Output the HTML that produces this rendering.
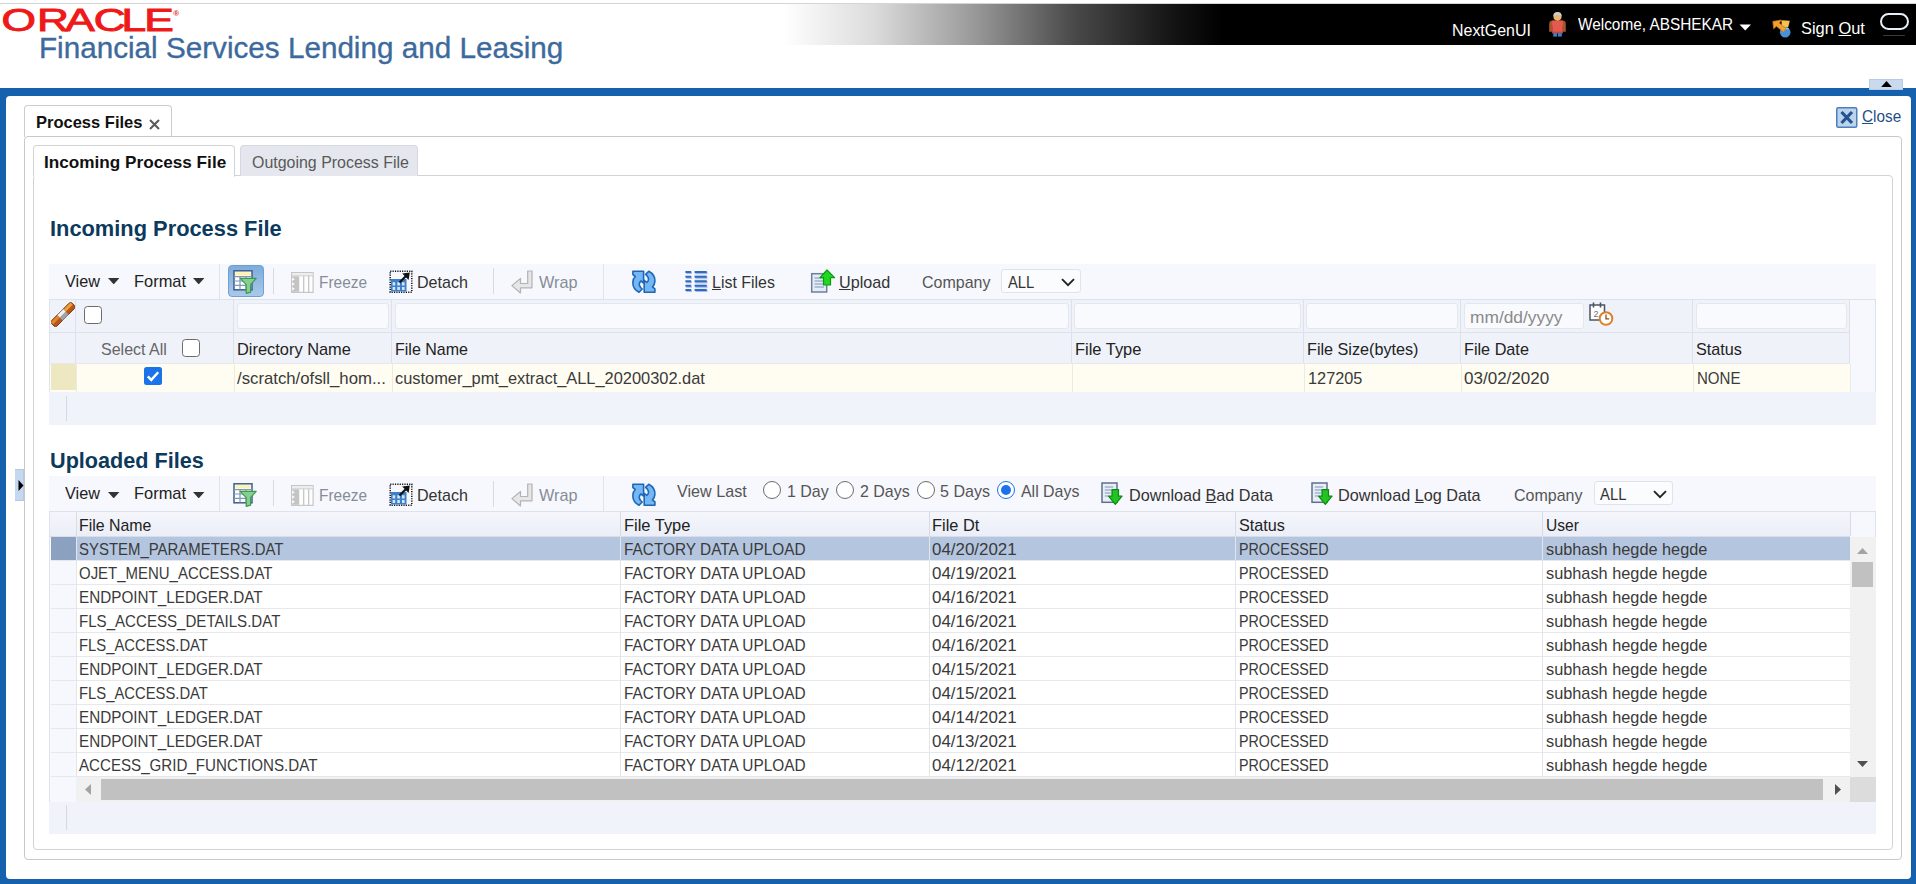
<!DOCTYPE html>
<html lang="en"><head><meta charset="utf-8"><title>Process Files</title>
<style>
html,body{margin:0;padding:0;}
body{width:1916px;height:884px;position:relative;overflow:hidden;background:#fff;font-family:"Liberation Sans",sans-serif;}
body>div,body>span,body>svg{position:absolute;box-sizing:border-box;}
.t{white-space:pre;display:block;transform-origin:0 0;}
u{text-decoration:underline;text-underline-offset:1px;}
.fs{-webkit-text-stroke:0.35px #3c6a9c;}

</style></head>
<body>
<div style="left:0px;top:3px;width:1916px;height:1px;background:#d4d4d4;"></div>
<div style="left:783px;top:4px;width:1133px;height:40.7px;background:linear-gradient(to right,#fff 0px,#dcdcdc 90px,#9a9a9a 190px,#4a4a4a 290px,#141414 390px,#000 440px);"></div>
<svg style="left:0;top:0" width="200" height="40" viewBox="0 0 200 40"><g transform="scale(1.42,1)"><text x="1.1 26.1 46 66 85.6 101.6" y="31.4" font-family="Liberation Sans, sans-serif" font-size="31.2" fill="#ee1a1a" stroke="#ee1a1a" stroke-width="0.95">ORACLE</text></g><text x="173.2" y="15.6" font-family="Liberation Sans, sans-serif" font-size="8" font-weight="700" fill="#ee1a1a">®</text></svg>
<span class="t fs" style="left:39.3px;top:33px;font-size:30px;line-height:30px;color:#3c6a9c;transform:scaleX(0.9886);">Financial Services Lending and Leasing</span>
<span class="t " style="left:1452.2px;top:22px;font-size:17px;line-height:17px;color:#fff;transform:scaleX(0.9382);">NextGenUI</span>
<span class="t " style="left:1577.5px;top:16px;font-size:17px;line-height:17px;color:#fff;transform:scaleX(0.9036);">Welcome, ABSHEKAR</span>
<svg style="left:1739px;top:24px" width="13" height="7" viewBox="0 0 13 7"><path d="M0.5 0.5h11.5l-5.75 6z" fill="#fff"/></svg>
<span class="t " style="left:1801.2px;top:20px;font-size:17px;line-height:17px;color:#fff;transform:scaleX(0.9657);">Sign <u>O</u>ut</span>
<svg style="left:1548px;top:11.5px" width="19" height="25" viewBox="0 0 19 25"><path d="M1.2 12q0-3.4 3.4-3.4h9.8q3.4 0 3.4 3.4v7.8h-3v-6h-10.6v6h-3z" fill="#a9552c"/><rect x="4.2" y="8.6" width="10.6" height="12" fill="#e55a4e"/><rect x="4.2" y="19.6" width="10.6" height="1.8" fill="#c7463c"/><rect x="5.2" y="21" width="3.9" height="3.6" fill="#3f7cc0"/><rect x="9.9" y="21" width="3.9" height="3.6" fill="#3f7cc0"/><circle cx="9.5" cy="4.6" r="4.1" fill="#eab676"/><path d="M5.4 4.2a4.1 4.1 0 0 1 8.2 0q-2 -1.6 -4.1 -1.2q-2.1 -.4 -4.1 1.2z" fill="#cfcfc9"/></svg>
<svg style="left:1772px;top:19px" width="20" height="19" viewBox="0 0 20 19"><circle cx="13.2" cy="13.2" r="5.3" fill="#4a90d9"/><path d="M10 11.5a4.5 4.5 0 0 1 6.5 -1.5" stroke="#9cc6f0" stroke-width="1.6" fill="none"/><path d="M9.5 1.2l8.3 .6 -1.6 6.4 -6.5 -.4z" fill="#f5c04e"/><path d="M0.8 2.4l8.6 -1.4 -2.2 3 7 5.6 -2.8 3.4 -7 -5.8 -2.7 2.6z" fill="#f0a030" stroke="#d07c16" stroke-width=".7"/></svg>
<div style="left:1879.5px;top:12.7px;width:29px;height:17.6px;border:2.8px solid #e6eefa;border-radius:8.8px;"></div>
<div style="left:1883px;top:35px;width:22px;height:1.4px;background:#3a3a3a;border-radius:1px;"></div>
<div style="left:0px;top:88.3px;width:1916px;height:795.7px;background:#1661ae;"></div>
<div style="left:6px;top:95.8px;width:1904.6px;height:782.8px;background:#fff;border-radius:4px;"></div>
<div style="left:1910.6px;top:100px;width:1.8px;height:774px;background:#1c5a9c;"></div>
<div style="left:1869px;top:79px;width:34px;height:11px;background:#c9daef;border:1px solid #b5cbe6;"></div>
<svg style="left:1880.5px;top:80.7px" width="11" height="6.2" viewBox="0 0 11 6.2"><path d="M0 6.2l5.5-6.2 5.5 6.2z" fill="#000"/></svg>
<div style="left:15.4px;top:469.4px;width:8.6px;height:31.6px;background:#c5d8f0;border:1px solid #b2c9e8;border-left:none;"></div>
<svg style="left:18px;top:480px" width="6" height="11" viewBox="0 0 6 11"><path d="M0.5 0l5 5.5-5 5.5z" fill="#000"/></svg>
<div style="left:24px;top:136px;width:1878px;height:724px;border:1px solid #c9c9c9;border-radius:4px;"></div>
<div style="left:24px;top:105px;width:148px;height:32px;border:1px solid #cdcdcd;border-bottom:none;border-radius:4px 4px 0 0;"></div>
<span class="t " style="left:35.7px;top:114px;font-size:17px;line-height:17px;color:#111;transform:scaleX(0.9706);font-weight:700;">Process Files</span>
<svg style="left:148.5px;top:119px" width="11" height="11" viewBox="0 0 11 11"><path d="M1 1l9 9M10 1l-9 9" stroke="#5a5a5a" stroke-width="2" fill="none"/></svg>
<svg style="left:1836px;top:106.5px" width="22" height="21" viewBox="0 0 22 21"><rect x="0.75" y="0.75" width="20" height="19.5" rx="1.5" fill="#bcd3ee" stroke="#4d7fb9" stroke-width="1.5"/><path d="M5.5 5l10.5 11M16 5l-10.5 11" stroke="#24548f" stroke-width="3.2" fill="none"/></svg>
<span class="t " style="left:1861.7px;top:108px;font-size:17px;line-height:17px;color:#1f4f86;transform:scaleX(0.9018);"><u>C</u>lose</span>
<div style="left:33px;top:175px;width:1860px;height:675px;border:1px solid #d3d3d3;border-radius:4px;"></div>
<div style="left:240px;top:145px;width:177.5px;height:30.5px;border:1px solid #d6dae0;border-bottom:none;border-radius:4px 4px 0 0;background:#e4e8ee;"></div>
<div style="left:33px;top:145px;width:201.5px;height:32px;border:1px solid #d3d3d3;border-bottom:1px solid #fff;border-radius:4px 4px 0 0;background:#fff;"></div>
<span class="t " style="left:44.4px;top:154px;font-size:17px;line-height:17px;color:#111;transform:scaleX(1.0097);font-weight:700;">Incoming Process File</span>
<span class="t " style="left:251.7px;top:154px;font-size:17px;line-height:17px;color:#595959;transform:scaleX(0.9381);">Outgoing Process File</span>
<span class="t " style="left:50.1px;top:218px;font-size:22px;line-height:22px;color:#0c3a5d;transform:scaleX(0.9922);font-weight:700;">Incoming Process File</span>
<div style="left:49px;top:264px;width:1827px;height:36px;background:#f7f8fd;"></div>
<div style="left:49px;top:299px;width:1827px;height:1px;background:#dde2ec;"></div>
<span class="t " style="left:65.2px;top:273px;font-size:17px;line-height:17px;color:#222;transform:scaleX(0.9549);">View</span>
<svg style="left:107.5px;top:278px" width="12" height="6.4" viewBox="0 0 12 6.4"><path d="M0 0h11.4l-5.7 6.4z" fill="#333"/></svg>
<span class="t " style="left:134.3px;top:273px;font-size:17px;line-height:17px;color:#222;transform:scaleX(0.9658);">Format</span>
<svg style="left:193.3px;top:278px" width="12" height="6.4" viewBox="0 0 12 6.4"><path d="M0 0h11.4l-5.7 6.4z" fill="#333"/></svg>
<div style="left:219px;top:264px;width:1px;height:35px;background:#e0e3ea;"></div>
<div style="left:228px;top:265px;width:36px;height:32px;background:linear-gradient(#7eacdb,#a9c9ea);border:1px solid #6f9fd3;border-radius:4px;"></div>
<svg style="left:233px;top:269.5px" width="26" height="25" viewBox="0 0 26 25"><rect x="1" y="0.8" width="18" height="19" fill="#fff" stroke="#3f5f88" stroke-width="1.5"/><rect x="2.2" y="2.2" width="15.6" height="3.4" fill="#fff1b5"/><path d="M1 6.6h18M1 11h18M1 15.4h18M7 6.6v13M13 6.6v13" stroke="#7f97b8" stroke-width="1.2"/><path d="M7.2 8.3h16l-5.6 6.3v7.6l-4.4 1.2v-8.8z" fill="#84d08e" stroke="#3d9a52" stroke-width="1.2" stroke-linejoin="round"/></svg>
<div style="left:273px;top:268px;width:1px;height:26px;background:#d7dae1;"></div>
<svg style="left:291px;top:271.5px" width="23" height="21" viewBox="0 0 23 21"><rect x="0.6" y="0.6" width="21.5" height="19.8" fill="#fdfdfd" stroke="#c6c6c6" stroke-width="1.2"/><rect x="1.2" y="1.2" width="20.3" height="2.3" fill="#ededed"/><path d="M0.6 3.8h21.5" stroke="#cfcfcf" stroke-width="1"/><path d="M1.2 4.3h7v15.5h-7z" fill="#c4c4c4"/><path d="M1.2 5.5l2.6 1.7l-2.6 1.7zM1.2 10.3l2.6 1.7l-2.6 1.7zM1.2 15.1l2.6 1.7l-2.6 1.7z" fill="#fff"/><path d="M12.7 4v16M17.7 4v16" stroke="#c2c2c2" stroke-width="1.2"/></svg>
<span class="t " style="left:319.3px;top:274px;font-size:17px;line-height:17px;color:#858d97;transform:scaleX(0.907);">Freeze</span>
<svg style="left:388.5px;top:269.5px" width="24" height="24" viewBox="0 0 24 24"><rect x="1.2" y="1.2" width="21.6" height="21" fill="none" stroke="#111" stroke-width="1.5" stroke-dasharray="1.2 1.17"/><rect x="2" y="9" width="15.5" height="12.5" fill="#3f7fc8"/><path d="M3.6 12.2h2.6v3.4h-2.6zM8.3 12.2h2.6v3.4h-2.6zM13 12.2h2.6v3.4h-2.6zM3.6 17h2.6v3h-2.6zM8.3 17h2.6v3h-2.6zM13 17h2.6v3h-2.6z" fill="#d2e6fc"/><path d="M10.5 12.5l8-8" stroke="#111" stroke-width="2.2"/><path d="M20.8 2.4l-7.6 1.2l6.4 6.4z" fill="#111"/></svg>
<span class="t " style="left:417.2px;top:274px;font-size:17px;line-height:17px;color:#333;transform:scaleX(0.9466);">Detach</span>
<div style="left:493px;top:268px;width:1px;height:26px;background:#d7dae1;"></div>
<svg style="left:510.5px;top:269.5px" width="22" height="24" viewBox="0 0 22 24"><path d="M16.7 1H21V17.8H9.5V23L0.9 15.6L9.5 8.5V13.5H16.7Z" fill="#e6e6e6" stroke="#b3b3b3" stroke-width="1.2" stroke-linejoin="round"/></svg>
<span class="t " style="left:539.1px;top:274px;font-size:17px;line-height:17px;color:#858d97;transform:scaleX(0.955);">Wrap</span>
<div style="left:603px;top:264px;width:1px;height:35px;background:#e0e3ea;"></div>
<svg style="left:632.3px;top:269.5px" width="25" height="25" viewBox="0 0 25 25"><g fill="#74b7f5" stroke="#1f66b5" stroke-width="1.6" stroke-linejoin="round"><path d="M0.9 1.2H11.6V13L9 11C7 12.5 6.6 15 8.6 17.5L10.2 19L7 22.2C3 20 0.6 16 0.9 12C1.1 9.3 2 7.6 3.3 6.5L0.9 4.6Z"/><path d="M0.9 1.2H11.6V13L9 11C7 12.5 6.6 15 8.6 17.5L10.2 19L7 22.2C3 20 0.6 16 0.9 12C1.1 9.3 2 7.6 3.3 6.5L0.9 4.6Z" transform="rotate(180 11.9 11.7)"/></g></svg>
<svg style="left:685px;top:270px" width="24" height="23" viewBox="0 0 24 23"><rect x="9.6" y="2" width="12.1" height="18" fill="#dfeafa"/><g stroke="#aab5ee" stroke-width="2.2"><path d="M1.2 2.9h5.7M10.4 2.9h12.1M1.2 7.6h5.7M10.4 7.6h12.1M1.2 12.1h5.7M10.4 12.1h12.1M1.2 16.6h5.7M10.4 16.6h12.1M1.2 20.9h5.7M10.4 20.9h12.1"/></g><g stroke="#2f6db8" stroke-width="2.1"><path d="M0.4 2h5.7M9.6 2h12.1M0.4 6.7h5.7M9.6 6.7h12.1M0.4 11.2h5.7M9.6 11.2h12.1M0.4 15.7h5.7M9.6 15.7h12.1M0.4 20h5.7M9.6 20h12.1"/></g></svg>
<span class="t " style="left:711.7px;top:274px;font-size:17px;line-height:17px;color:#333;transform:scaleX(0.9375);"><u>L</u>ist Files</span>
<svg style="left:810px;top:269px" width="26" height="25" viewBox="0 0 26 25"><rect x="1.7" y="4.7" width="15" height="18.3" fill="#e3ecf7" stroke="#6f7f99" stroke-width="1.5"/><path d="M4.5 9h8M4.5 12h9.5M4.5 15h9.5M4.5 18h9.5" stroke="#9fb2cc" stroke-width="1.3"/><path d="M17 1l7.6 7.7h-4.1v7.3h-7v-7.3h-3.5z" fill="#1fd81f" stroke="#0c9a12" stroke-width="1.2" stroke-linejoin="round"/></svg>
<span class="t " style="left:838.7px;top:274px;font-size:17px;line-height:17px;color:#333;transform:scaleX(0.9501);"><u>U</u>pload</span>
<span class="t " style="left:922.1px;top:274px;font-size:17px;line-height:17px;color:#555;transform:scaleX(0.9414);">Company</span>
<div style="left:1001px;top:269.4px;width:80.40000000000009px;height:24.0px;background:#fbfcfe;border:1px solid #dfe3ea;border-radius:3px;"></div>
<span class="t " style="left:1008.3px;top:274px;font-size:17px;line-height:17px;color:#333;transform:scaleX(0.8694);">ALL</span>
<svg style="left:1061px;top:277.59999999999997px" width="14" height="9" viewBox="0 0 14 9"><path d="M1 1.2l6 6 6-6" stroke="#222" stroke-width="1.9" fill="none"/></svg>
<div style="left:49px;top:300px;width:1801px;height:64px;background:#eff2f9;"></div>
<div style="left:1850px;top:300px;width:26px;height:92px;background:#f7f8fd;"></div>
<div style="left:1875px;top:300px;width:1px;height:92px;background:#dde2ec;"></div>
<div style="left:49px;top:331.5px;width:1801px;height:1.0px;background:#dde1ea;"></div>
<div style="left:49px;top:363px;width:1801px;height:1px;background:#e6e8ee;"></div>
<div style="left:49px;top:364px;width:1801px;height:28px;background:#fffdf1;"></div>
<div style="left:49px;top:300px;width:1px;height:92px;background:#dde2ec;"></div>
<div style="left:50.8px;top:363.8px;width:25.2px;height:26.7px;background:#ede8c2;"></div>
<div style="left:49px;top:392px;width:1827px;height:33px;background:#f0f3fa;"></div>
<div style="left:66.3px;top:396px;width:1.0px;height:24.7px;background:#d5d9e2;"></div>
<div style="left:75.0px;top:300px;width:1.0px;height:63px;background:#dde1ea;"></div>
<div style="left:76.0px;top:364px;width:1.0px;height:28px;background:#ebebe0;"></div>
<div style="left:232.5px;top:300px;width:1.0px;height:63px;background:#dde1ea;"></div>
<div style="left:233.5px;top:364px;width:1.0px;height:28px;background:#ebebe0;"></div>
<div style="left:391.0px;top:300px;width:1.0px;height:63px;background:#dde1ea;"></div>
<div style="left:392.0px;top:364px;width:1.0px;height:28px;background:#ebebe0;"></div>
<div style="left:1070.9px;top:300px;width:1.0px;height:63px;background:#dde1ea;"></div>
<div style="left:1071.9px;top:364px;width:1.0px;height:28px;background:#ebebe0;"></div>
<div style="left:1302.9px;top:300px;width:1.0px;height:63px;background:#dde1ea;"></div>
<div style="left:1303.9px;top:364px;width:1.0px;height:28px;background:#ebebe0;"></div>
<div style="left:1459.9px;top:300px;width:1.0px;height:63px;background:#dde1ea;"></div>
<div style="left:1460.9px;top:364px;width:1.0px;height:28px;background:#ebebe0;"></div>
<div style="left:1691.7px;top:300px;width:1.0px;height:63px;background:#dde1ea;"></div>
<div style="left:1692.7px;top:364px;width:1.0px;height:28px;background:#ebebe0;"></div>
<div style="left:1849.0px;top:300px;width:1.0px;height:63px;background:#dde1ea;"></div>
<div style="left:1850.0px;top:364px;width:1.0px;height:28px;background:#ebebe0;"></div>
<div style="left:236.5px;top:303px;width:152.7px;height:26px;background:#f9fafd;border:1px solid #e3e7ee;border-radius:3px;"></div>
<div style="left:394.5px;top:303px;width:674.7px;height:26px;background:#f9fafd;border:1px solid #e3e7ee;border-radius:3px;"></div>
<div style="left:1074.4px;top:303px;width:226.8px;height:26px;background:#f9fafd;border:1px solid #e3e7ee;border-radius:3px;"></div>
<div style="left:1306px;top:303px;width:152.2px;height:26px;background:#f9fafd;border:1px solid #e3e7ee;border-radius:3px;"></div>
<div style="left:1464px;top:303px;width:120.1px;height:26px;background:#f9fafd;border:1px solid #e3e7ee;border-radius:3px;"></div>
<div style="left:1695.5px;top:303px;width:151.8px;height:26px;background:#f9fafd;border:1px solid #e3e7ee;border-radius:3px;"></div>
<span class="t " style="left:1470.1px;top:309px;font-size:17px;line-height:17px;color:#8a8a8a;transform:scaleX(1.02);">mm/dd/yyyy</span>
<svg style="left:1589px;top:301.5px" width="25" height="24" viewBox="0 0 25 24"><rect x="1" y="3" width="14.5" height="15" fill="#fff" stroke="#4b5563" stroke-width="1.5"/><path d="M4.5 0.5v5M11.5 0.5v5" stroke="#4b5563" stroke-width="1.6"/><text x="4.6" y="14.5" font-family="Liberation Sans, sans-serif" font-size="9" fill="#6b7280">2</text><circle cx="17" cy="16.5" r="6.3" fill="#fff" stroke="#d9822b" stroke-width="2"/><path d="M17 12.5v4.3h3.2" stroke="#8a4a14" stroke-width="1.3" fill="none"/></svg>
<svg style="left:51px;top:302px" width="24" height="25" viewBox="0 0 24 25"><g transform="rotate(-45 12 12.5)"><rect x="-2.5" y="8.8" width="29" height="7.6" rx="2.2" fill="#b9541c" stroke="#6e3a14" stroke-width="0.9"/><rect x="7.5" y="8.8" width="8.5" height="7.6" fill="#9ea3a8"/><rect x="7.5" y="9.2" width="8.5" height="3" fill="#f1f1f1"/><rect x="16.3" y="9.3" width="9.5" height="3.2" fill="#eea033"/><rect x="-2" y="9.3" width="9.3" height="3.2" fill="#e2862a"/></g></svg>
<div style="left:84px;top:306px;width:18px;height:18px;background:#fff;border:1.6px solid #6b6b6b;border-radius:3.5px;"></div>
<div style="left:182px;top:339px;width:18px;height:18px;background:#fff;border:1.6px solid #6b6b6b;border-radius:3.5px;"></div>
<svg style="left:143.8px;top:366.7px" width="18" height="18" viewBox="0 0 18 18"><rect x="0" y="0" width="18" height="18" rx="2.5" fill="#1a73e8"/><path d="M3.8 9.3l3.5 3.6 6.9-7.6" stroke="#fff" stroke-width="2.4" fill="none"/></svg>
<span class="t " style="left:100.7px;top:341px;font-size:17px;line-height:17px;color:#666;transform:scaleX(0.9423);">Select All</span>
<span class="t " style="left:236.7px;top:341px;font-size:17px;line-height:17px;color:#222;transform:scaleX(0.9645);">Directory Name</span>
<span class="t " style="left:394.7px;top:341px;font-size:17px;line-height:17px;color:#222;transform:scaleX(0.941);">File Name</span>
<span class="t " style="left:1074.7px;top:341px;font-size:17px;line-height:17px;color:#222;transform:scaleX(0.9669);">File Type</span>
<span class="t " style="left:1306.7px;top:341px;font-size:17px;line-height:17px;color:#222;transform:scaleX(0.9518);">File Size(bytes)</span>
<span class="t " style="left:1463.7px;top:341px;font-size:17px;line-height:17px;color:#222;transform:scaleX(0.954);">File Date</span>
<span class="t " style="left:1695.7px;top:341px;font-size:17px;line-height:17px;color:#222;transform:scaleX(0.9522);">Status</span>
<span class="t " style="left:236.7px;top:370px;font-size:17px;line-height:17px;color:#3a3a3a;transform:scaleX(0.985);">/scratch/ofsll_hom...</span>
<span class="t " style="left:394.7px;top:370px;font-size:17px;line-height:17px;color:#3a3a3a;transform:scaleX(0.9644);">customer_pmt_extract_ALL_20200302.dat</span>
<span class="t " style="left:1307.7px;top:370px;font-size:17px;line-height:17px;color:#3a3a3a;transform:scaleX(0.9589);">127205</span>
<span class="t " style="left:1464.4px;top:370px;font-size:17px;line-height:17px;color:#3a3a3a;transform:scaleX(1.0012);">03/02/2020</span>
<span class="t " style="left:1696.7px;top:370px;font-size:17px;line-height:17px;color:#3a3a3a;transform:scaleX(0.8855);">NONE</span>
<span class="t " style="left:50.1px;top:450px;font-size:22px;line-height:22px;color:#0c3a5d;transform:scaleX(0.9835);font-weight:700;">Uploaded Files</span>
<div style="left:49px;top:476px;width:1827px;height:35.5px;background:#f7f8fd;"></div>
<span class="t " style="left:65.2px;top:485px;font-size:17px;line-height:17px;color:#222;transform:scaleX(0.9549);">View</span>
<svg style="left:107.5px;top:492px" width="12" height="6.4" viewBox="0 0 12 6.4"><path d="M0 0h11.4l-5.7 6.4z" fill="#333"/></svg>
<span class="t " style="left:134.3px;top:485px;font-size:17px;line-height:17px;color:#222;transform:scaleX(0.9658);">Format</span>
<svg style="left:193.3px;top:492px" width="12" height="6.4" viewBox="0 0 12 6.4"><path d="M0 0h11.4l-5.7 6.4z" fill="#333"/></svg>
<div style="left:219px;top:476px;width:1px;height:35px;background:#e0e3ea;"></div>
<svg style="left:233px;top:482.5px" width="26" height="25" viewBox="0 0 26 25"><rect x="1" y="0.8" width="18" height="19" fill="#fff" stroke="#3f5f88" stroke-width="1.5"/><rect x="2.2" y="2.2" width="15.6" height="3.4" fill="#fff1b5"/><path d="M1 6.6h18M1 11h18M1 15.4h18M7 6.6v13M13 6.6v13" stroke="#7f97b8" stroke-width="1.2"/><path d="M7.2 8.3h16l-5.6 6.3v7.6l-4.4 1.2v-8.8z" fill="#84d08e" stroke="#3d9a52" stroke-width="1.2" stroke-linejoin="round"/></svg>
<div style="left:273px;top:480px;width:1px;height:26px;background:#d7dae1;"></div>
<svg style="left:291px;top:484.5px" width="23" height="21" viewBox="0 0 23 21"><rect x="0.6" y="0.6" width="21.5" height="19.8" fill="#fdfdfd" stroke="#c6c6c6" stroke-width="1.2"/><rect x="1.2" y="1.2" width="20.3" height="2.3" fill="#ededed"/><path d="M0.6 3.8h21.5" stroke="#cfcfcf" stroke-width="1"/><path d="M1.2 4.3h7v15.5h-7z" fill="#c4c4c4"/><path d="M1.2 5.5l2.6 1.7l-2.6 1.7zM1.2 10.3l2.6 1.7l-2.6 1.7zM1.2 15.1l2.6 1.7l-2.6 1.7z" fill="#fff"/><path d="M12.7 4v16M17.7 4v16" stroke="#c2c2c2" stroke-width="1.2"/></svg>
<span class="t " style="left:319.3px;top:487px;font-size:17px;line-height:17px;color:#858d97;transform:scaleX(0.907);">Freeze</span>
<svg style="left:388.5px;top:482.5px" width="24" height="24" viewBox="0 0 24 24"><rect x="1.2" y="1.2" width="21.6" height="21" fill="none" stroke="#111" stroke-width="1.5" stroke-dasharray="1.2 1.17"/><rect x="2" y="9" width="15.5" height="12.5" fill="#3f7fc8"/><path d="M3.6 12.2h2.6v3.4h-2.6zM8.3 12.2h2.6v3.4h-2.6zM13 12.2h2.6v3.4h-2.6zM3.6 17h2.6v3h-2.6zM8.3 17h2.6v3h-2.6zM13 17h2.6v3h-2.6z" fill="#d2e6fc"/><path d="M10.5 12.5l8-8" stroke="#111" stroke-width="2.2"/><path d="M20.8 2.4l-7.6 1.2l6.4 6.4z" fill="#111"/></svg>
<span class="t " style="left:417.2px;top:487px;font-size:17px;line-height:17px;color:#333;transform:scaleX(0.9466);">Detach</span>
<div style="left:493px;top:481px;width:1px;height:26px;background:#d7dae1;"></div>
<svg style="left:510.5px;top:482.5px" width="22" height="24" viewBox="0 0 22 24"><path d="M16.7 1H21V17.8H9.5V23L0.9 15.6L9.5 8.5V13.5H16.7Z" fill="#e6e6e6" stroke="#b3b3b3" stroke-width="1.2" stroke-linejoin="round"/></svg>
<span class="t " style="left:539.1px;top:487px;font-size:17px;line-height:17px;color:#858d97;transform:scaleX(0.955);">Wrap</span>
<div style="left:603px;top:476px;width:1px;height:35px;background:#e0e3ea;"></div>
<svg style="left:632.3px;top:482.5px" width="25" height="25" viewBox="0 0 25 25"><g fill="#74b7f5" stroke="#1f66b5" stroke-width="1.6" stroke-linejoin="round"><path d="M0.9 1.2H11.6V13L9 11C7 12.5 6.6 15 8.6 17.5L10.2 19L7 22.2C3 20 0.6 16 0.9 12C1.1 9.3 2 7.6 3.3 6.5L0.9 4.6Z"/><path d="M0.9 1.2H11.6V13L9 11C7 12.5 6.6 15 8.6 17.5L10.2 19L7 22.2C3 20 0.6 16 0.9 12C1.1 9.3 2 7.6 3.3 6.5L0.9 4.6Z" transform="rotate(180 11.9 11.7)"/></g></svg>
<span class="t " style="left:677.2px;top:483px;font-size:17px;line-height:17px;color:#555;transform:scaleX(0.9495);">View Last</span>
<div style="left:762.7px;top:481px;width:18.4px;height:18.4px;border-radius:50%;border:1.5px solid #6b6b6b;background:#fff;"></div>
<div style="left:835.6px;top:481px;width:18.4px;height:18.4px;border-radius:50%;border:1.5px solid #6b6b6b;background:#fff;"></div>
<div style="left:916.5px;top:481px;width:18.4px;height:18.4px;border-radius:50%;border:1.5px solid #6b6b6b;background:#fff;"></div>
<div style="left:996.7px;top:481px;width:18.4px;height:18.4px;border-radius:50%;border:1.8px solid #1a73e8;background:#fff;"></div>
<div style="left:1000.9000000000001px;top:485.2px;width:10px;height:10px;border-radius:50%;background:#1a73e8;"></div>
<span class="t " style="left:787.4px;top:483px;font-size:17px;line-height:17px;color:#555;transform:scaleX(0.9387);">1 Day</span>
<span class="t " style="left:860.2px;top:483px;font-size:17px;line-height:17px;color:#555;transform:scaleX(0.9391);">2 Days</span>
<span class="t " style="left:940.4px;top:483px;font-size:17px;line-height:17px;color:#555;transform:scaleX(0.9448);">5 Days</span>
<span class="t " style="left:1021.2px;top:483px;font-size:17px;line-height:17px;color:#555;transform:scaleX(0.9365);">All Days</span>
<svg style="left:1100px;top:481px" width="24" height="25" viewBox="0 0 24 25"><rect x="2" y="2" width="15" height="19.3" fill="#e8eef7" stroke="#5f6f8c" stroke-width="1.5"/><path d="M4.8 6h8.5M4.8 9h8.5M4.8 12h6M4.8 15h4" stroke="#9fb2cc" stroke-width="1.3"/><path d="M12 8.6h6.5v6.6h3.5l-6.7 8.2l-6.7-8.2h3.4z" fill="#22c422" stroke="#0d8a12" stroke-width="1.2" stroke-linejoin="round"/></svg>
<svg style="left:1309.5px;top:481px" width="24" height="25" viewBox="0 0 24 25"><rect x="2" y="2" width="15" height="19.3" fill="#e8eef7" stroke="#5f6f8c" stroke-width="1.5"/><path d="M4.8 6h8.5M4.8 9h8.5M4.8 12h6M4.8 15h4" stroke="#9fb2cc" stroke-width="1.3"/><path d="M12 8.6h6.5v6.6h3.5l-6.7 8.2l-6.7-8.2h3.4z" fill="#22c422" stroke="#0d8a12" stroke-width="1.2" stroke-linejoin="round"/></svg>
<span class="t " style="left:1129.0px;top:487px;font-size:17px;line-height:17px;color:#333;transform:scaleX(0.9523);">Download <u>B</u>ad Data</span>
<span class="t " style="left:1338.0px;top:487px;font-size:17px;line-height:17px;color:#333;transform:scaleX(0.9548);">Download <u>L</u>og Data</span>
<span class="t " style="left:1514.3px;top:487px;font-size:17px;line-height:17px;color:#555;transform:scaleX(0.9414);">Company</span>
<div style="left:1593.5px;top:481.4px;width:79.90000000000009px;height:24.0px;background:#fbfcfe;border:1px solid #dfe3ea;border-radius:3px;"></div>
<span class="t " style="left:1600.2px;top:486px;font-size:17px;line-height:17px;color:#333;transform:scaleX(0.8727);">ALL</span>
<svg style="left:1653px;top:489.59999999999997px" width="14" height="9" viewBox="0 0 14 9"><path d="M1 1.2l6 6 6-6" stroke="#222" stroke-width="1.9" fill="none"/></svg>
<div style="left:49px;top:511px;width:1827px;height:1px;background:#dde2ec;"></div>
<div style="left:49px;top:512px;width:1801px;height:25px;background:linear-gradient(#f4f6fb,#ebeef7);"></div>
<div style="left:1850px;top:512px;width:26px;height:25px;background:#f7f8fd;"></div>
<div style="left:1875px;top:512px;width:1px;height:25px;background:#dde2ec;"></div>
<div style="left:49px;top:536.3px;width:1801px;height:1.0px;background:#d9dde5;"></div>
<div style="left:75.5px;top:512.3px;width:1.0px;height:24.2px;background:#d6dbe6;"></div>
<div style="left:620.1px;top:512.3px;width:1.0px;height:24.2px;background:#d6dbe6;"></div>
<div style="left:928.5px;top:512.3px;width:1.0px;height:24.2px;background:#d6dbe6;"></div>
<div style="left:1235.3px;top:512.3px;width:1.0px;height:24.2px;background:#d6dbe6;"></div>
<div style="left:1542.0px;top:512.3px;width:1.0px;height:24.2px;background:#d6dbe6;"></div>
<div style="left:1849.5px;top:512.3px;width:1.0px;height:24.2px;background:#d6dbe6;"></div>
<span class="t " style="left:79.2px;top:517px;font-size:17px;line-height:17px;color:#222;transform:scaleX(0.9346);">File Name</span>
<span class="t " style="left:623.7px;top:517px;font-size:17px;line-height:17px;color:#222;transform:scaleX(0.9669);">File Type</span>
<span class="t " style="left:931.7px;top:517px;font-size:17px;line-height:17px;color:#222;transform:scaleX(0.9628);">File Dt</span>
<span class="t " style="left:1238.7px;top:517px;font-size:17px;line-height:17px;color:#222;transform:scaleX(0.9522);">Status</span>
<span class="t " style="left:1545.7px;top:517px;font-size:17px;line-height:17px;color:#222;transform:scaleX(0.9163);">User</span>
<div style="left:49px;top:537.3px;width:1801px;height:239.7px;background:#fff;"></div>
<div style="left:50px;top:537.3px;width:26px;height:239.7px;background:#f7f8fd;"></div>
<div style="left:76px;top:537.3px;width:1774px;height:22.7px;background:#b4c6df;"></div>
<div style="left:50.8px;top:537.3px;width:25.2px;height:22.7px;background:#8ca1c0;"></div>
<div style="left:50.8px;top:559.5px;width:1799.2px;height:1.0px;background:#e6e8ec;"></div>
<div style="left:50.8px;top:583.5px;width:1799.2px;height:1.0px;background:#e6e8ec;"></div>
<div style="left:50.8px;top:607.5px;width:1799.2px;height:1.0px;background:#e6e8ec;"></div>
<div style="left:50.8px;top:631.5px;width:1799.2px;height:1.0px;background:#e6e8ec;"></div>
<div style="left:50.8px;top:655.5px;width:1799.2px;height:1.0px;background:#e6e8ec;"></div>
<div style="left:50.8px;top:679.5px;width:1799.2px;height:1.0px;background:#e6e8ec;"></div>
<div style="left:50.8px;top:703.5px;width:1799.2px;height:1.0px;background:#e6e8ec;"></div>
<div style="left:50.8px;top:727.5px;width:1799.2px;height:1.0px;background:#e6e8ec;"></div>
<div style="left:50.8px;top:751.5px;width:1799.2px;height:1.0px;background:#e6e8ec;"></div>
<div style="left:50.8px;top:775.5px;width:1799.2px;height:1.0px;background:#e6e8ec;"></div>
<div style="left:75.5px;top:537.3px;width:1.0px;height:239.7px;background:#e3e5ea;"></div>
<div style="left:620.1px;top:537.3px;width:1.0px;height:239.7px;background:#e3e5ea;"></div>
<div style="left:928.5px;top:537.3px;width:1.0px;height:239.7px;background:#e3e5ea;"></div>
<div style="left:1235.3px;top:537.3px;width:1.0px;height:239.7px;background:#e3e5ea;"></div>
<div style="left:1542.0px;top:537.3px;width:1.0px;height:239.7px;background:#e3e5ea;"></div>
<span class="t " style="left:79.2px;top:541px;font-size:17px;line-height:17px;color:#3a3a3a;transform:scaleX(0.8784);">SYSTEM_PARAMETERS.DAT</span>
<span class="t " style="left:624.4px;top:541px;font-size:17px;line-height:17px;color:#3a3a3a;transform:scaleX(0.9052);">FACTORY DATA UPLOAD</span>
<span class="t " style="left:932.4px;top:541px;font-size:17px;line-height:17px;color:#3a3a3a;transform:scaleX(0.9954);">04/20/2021</span>
<span class="t " style="left:1239.4px;top:541px;font-size:17px;line-height:17px;color:#3a3a3a;transform:scaleX(0.8384);">PROCESSED</span>
<span class="t " style="left:1545.7px;top:541px;font-size:17px;line-height:17px;color:#3a3a3a;transform:scaleX(0.9592);">subhash hegde hegde</span>
<span class="t " style="left:79.2px;top:565px;font-size:17px;line-height:17px;color:#3a3a3a;transform:scaleX(0.88);">OJET_MENU_ACCESS.DAT</span>
<span class="t " style="left:624.4px;top:565px;font-size:17px;line-height:17px;color:#3a3a3a;transform:scaleX(0.9052);">FACTORY DATA UPLOAD</span>
<span class="t " style="left:932.4px;top:565px;font-size:17px;line-height:17px;color:#3a3a3a;transform:scaleX(0.9954);">04/19/2021</span>
<span class="t " style="left:1239.4px;top:565px;font-size:17px;line-height:17px;color:#3a3a3a;transform:scaleX(0.8384);">PROCESSED</span>
<span class="t " style="left:1545.7px;top:565px;font-size:17px;line-height:17px;color:#3a3a3a;transform:scaleX(0.9592);">subhash hegde hegde</span>
<span class="t " style="left:79.2px;top:589px;font-size:17px;line-height:17px;color:#3a3a3a;transform:scaleX(0.8975);">ENDPOINT_LEDGER.DAT</span>
<span class="t " style="left:624.4px;top:589px;font-size:17px;line-height:17px;color:#3a3a3a;transform:scaleX(0.9052);">FACTORY DATA UPLOAD</span>
<span class="t " style="left:932.4px;top:589px;font-size:17px;line-height:17px;color:#3a3a3a;transform:scaleX(0.9954);">04/16/2021</span>
<span class="t " style="left:1239.4px;top:589px;font-size:17px;line-height:17px;color:#3a3a3a;transform:scaleX(0.8384);">PROCESSED</span>
<span class="t " style="left:1545.7px;top:589px;font-size:17px;line-height:17px;color:#3a3a3a;transform:scaleX(0.9592);">subhash hegde hegde</span>
<span class="t " style="left:79.2px;top:613px;font-size:17px;line-height:17px;color:#3a3a3a;transform:scaleX(0.887);">FLS_ACCESS_DETAILS.DAT</span>
<span class="t " style="left:624.4px;top:613px;font-size:17px;line-height:17px;color:#3a3a3a;transform:scaleX(0.9052);">FACTORY DATA UPLOAD</span>
<span class="t " style="left:932.4px;top:613px;font-size:17px;line-height:17px;color:#3a3a3a;transform:scaleX(0.9954);">04/16/2021</span>
<span class="t " style="left:1239.4px;top:613px;font-size:17px;line-height:17px;color:#3a3a3a;transform:scaleX(0.8384);">PROCESSED</span>
<span class="t " style="left:1545.7px;top:613px;font-size:17px;line-height:17px;color:#3a3a3a;transform:scaleX(0.9592);">subhash hegde hegde</span>
<span class="t " style="left:79.2px;top:637px;font-size:17px;line-height:17px;color:#3a3a3a;transform:scaleX(0.8709);">FLS_ACCESS.DAT</span>
<span class="t " style="left:624.4px;top:637px;font-size:17px;line-height:17px;color:#3a3a3a;transform:scaleX(0.9052);">FACTORY DATA UPLOAD</span>
<span class="t " style="left:932.4px;top:637px;font-size:17px;line-height:17px;color:#3a3a3a;transform:scaleX(0.9954);">04/16/2021</span>
<span class="t " style="left:1239.4px;top:637px;font-size:17px;line-height:17px;color:#3a3a3a;transform:scaleX(0.8384);">PROCESSED</span>
<span class="t " style="left:1545.7px;top:637px;font-size:17px;line-height:17px;color:#3a3a3a;transform:scaleX(0.9592);">subhash hegde hegde</span>
<span class="t " style="left:79.2px;top:661px;font-size:17px;line-height:17px;color:#3a3a3a;transform:scaleX(0.8975);">ENDPOINT_LEDGER.DAT</span>
<span class="t " style="left:624.4px;top:661px;font-size:17px;line-height:17px;color:#3a3a3a;transform:scaleX(0.9052);">FACTORY DATA UPLOAD</span>
<span class="t " style="left:932.4px;top:661px;font-size:17px;line-height:17px;color:#3a3a3a;transform:scaleX(0.9954);">04/15/2021</span>
<span class="t " style="left:1239.4px;top:661px;font-size:17px;line-height:17px;color:#3a3a3a;transform:scaleX(0.8384);">PROCESSED</span>
<span class="t " style="left:1545.7px;top:661px;font-size:17px;line-height:17px;color:#3a3a3a;transform:scaleX(0.9592);">subhash hegde hegde</span>
<span class="t " style="left:79.2px;top:685px;font-size:17px;line-height:17px;color:#3a3a3a;transform:scaleX(0.8709);">FLS_ACCESS.DAT</span>
<span class="t " style="left:624.4px;top:685px;font-size:17px;line-height:17px;color:#3a3a3a;transform:scaleX(0.9052);">FACTORY DATA UPLOAD</span>
<span class="t " style="left:932.4px;top:685px;font-size:17px;line-height:17px;color:#3a3a3a;transform:scaleX(0.9954);">04/15/2021</span>
<span class="t " style="left:1239.4px;top:685px;font-size:17px;line-height:17px;color:#3a3a3a;transform:scaleX(0.8384);">PROCESSED</span>
<span class="t " style="left:1545.7px;top:685px;font-size:17px;line-height:17px;color:#3a3a3a;transform:scaleX(0.9592);">subhash hegde hegde</span>
<span class="t " style="left:79.2px;top:709px;font-size:17px;line-height:17px;color:#3a3a3a;transform:scaleX(0.8975);">ENDPOINT_LEDGER.DAT</span>
<span class="t " style="left:624.4px;top:709px;font-size:17px;line-height:17px;color:#3a3a3a;transform:scaleX(0.9052);">FACTORY DATA UPLOAD</span>
<span class="t " style="left:932.4px;top:709px;font-size:17px;line-height:17px;color:#3a3a3a;transform:scaleX(0.9954);">04/14/2021</span>
<span class="t " style="left:1239.4px;top:709px;font-size:17px;line-height:17px;color:#3a3a3a;transform:scaleX(0.8384);">PROCESSED</span>
<span class="t " style="left:1545.7px;top:709px;font-size:17px;line-height:17px;color:#3a3a3a;transform:scaleX(0.9592);">subhash hegde hegde</span>
<span class="t " style="left:79.2px;top:733px;font-size:17px;line-height:17px;color:#3a3a3a;transform:scaleX(0.8975);">ENDPOINT_LEDGER.DAT</span>
<span class="t " style="left:624.4px;top:733px;font-size:17px;line-height:17px;color:#3a3a3a;transform:scaleX(0.9052);">FACTORY DATA UPLOAD</span>
<span class="t " style="left:932.4px;top:733px;font-size:17px;line-height:17px;color:#3a3a3a;transform:scaleX(0.9954);">04/13/2021</span>
<span class="t " style="left:1239.4px;top:733px;font-size:17px;line-height:17px;color:#3a3a3a;transform:scaleX(0.8384);">PROCESSED</span>
<span class="t " style="left:1545.7px;top:733px;font-size:17px;line-height:17px;color:#3a3a3a;transform:scaleX(0.9592);">subhash hegde hegde</span>
<span class="t " style="left:79.2px;top:757px;font-size:17px;line-height:17px;color:#3a3a3a;transform:scaleX(0.8897);">ACCESS_GRID_FUNCTIONS.DAT</span>
<span class="t " style="left:624.4px;top:757px;font-size:17px;line-height:17px;color:#3a3a3a;transform:scaleX(0.9052);">FACTORY DATA UPLOAD</span>
<span class="t " style="left:932.4px;top:757px;font-size:17px;line-height:17px;color:#3a3a3a;transform:scaleX(0.9954);">04/12/2021</span>
<span class="t " style="left:1239.4px;top:757px;font-size:17px;line-height:17px;color:#3a3a3a;transform:scaleX(0.8384);">PROCESSED</span>
<span class="t " style="left:1545.7px;top:757px;font-size:17px;line-height:17px;color:#3a3a3a;transform:scaleX(0.9592);">subhash hegde hegde</span>
<div style="left:1850px;top:537.3px;width:26px;height:239.7px;background:#f1f1f1;"></div>
<svg style="left:1857px;top:547.5px" width="11" height="6" viewBox="0 0 11 6"><path d="M0 6l5.5-6 5.5 6z" fill="#a3a3a3"/></svg>
<div style="left:1852.3px;top:562px;width:20.5px;height:24.6px;background:#c1c1c1;"></div>
<svg style="left:1857px;top:761px" width="11" height="6" viewBox="0 0 11 6"><path d="M0 0h11l-5.5 6z" fill="#505050"/></svg>
<div style="left:49px;top:777px;width:27px;height:25px;background:#f7f8fd;"></div>
<div style="left:49px;top:512px;width:1px;height:290px;background:#dde2ec;"></div>
<div style="left:76px;top:777px;width:1774px;height:24.5px;background:#f1f1f1;"></div>
<div style="left:1850px;top:777px;width:26px;height:24.5px;background:#dcdcdc;"></div>
<svg style="left:85px;top:784.3px" width="6" height="11" viewBox="0 0 6 11"><path d="M6 0v11l-6-5.5z" fill="#a3a3a3"/></svg>
<div style="left:101px;top:779px;width:1722px;height:21px;background:#c1c1c1;"></div>
<svg style="left:1834.5px;top:784.3px" width="6" height="11" viewBox="0 0 6 11"><path d="M0 0v11l6-5.5z" fill="#505050"/></svg>
<div style="left:49px;top:802px;width:1827px;height:32px;background:#f0f3fa;"></div>
<div style="left:66.3px;top:805px;width:1.0px;height:25px;background:#d5d9e2;"></div>
</body></html>
